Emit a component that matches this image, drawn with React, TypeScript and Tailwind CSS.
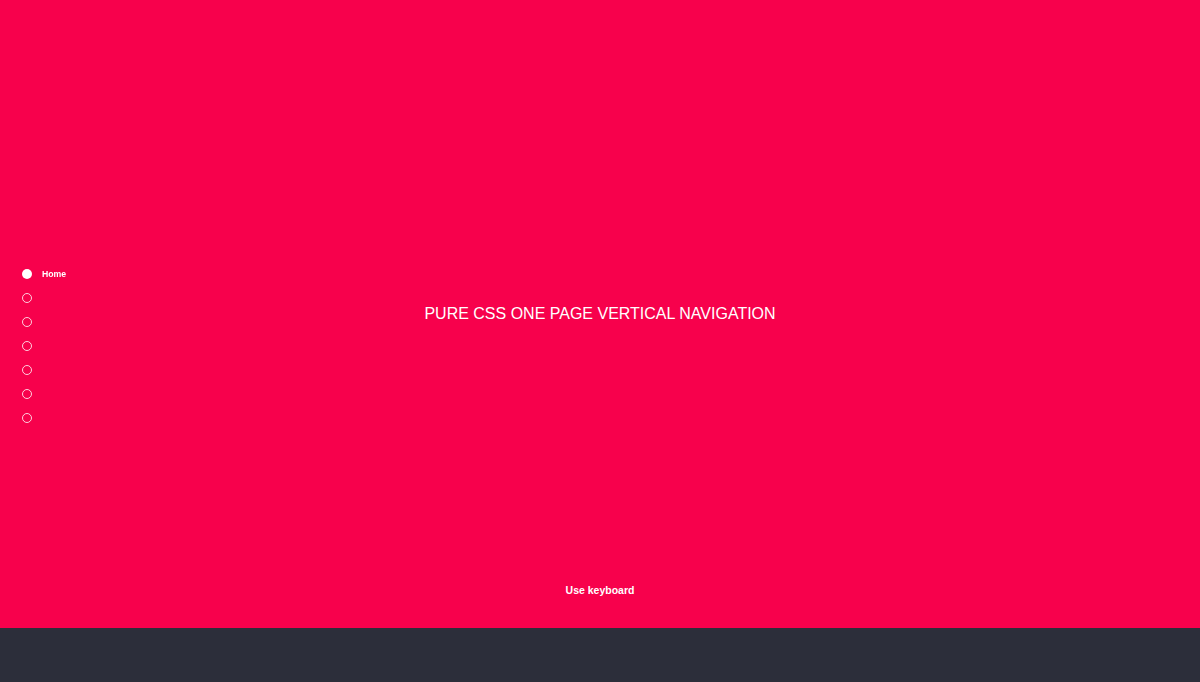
import * as React from 'react';

const sections = ['Home', 'About', 'Work', 'Services', 'Team', 'Blog', 'Contact'];

export default function App() {
  const active = 0;
  return (
    <div className="min-h-[682px] bg-[#2c2e3a] font-['Liberation_Sans',Arial,sans-serif] text-white">
      {/* Side navigation */}
      <nav className="fixed left-[22px] top-[262px] z-10">
        <ul className="flex flex-col">
          {sections.map((name, i) => (
            <li key={name} className="flex h-6 items-center gap-[10px]">
              <span
                className={
                  i === active
                    ? 'h-[10px] w-[10px] rounded-full bg-white'
                    : 'h-[10px] w-[10px] rounded-full border border-white/80'
                }
              />
              {i === active && <span className="text-[8.7px] font-bold leading-none">{name}</span>}
            </li>
          ))}
        </ul>
      </nav>

      {/* Section */}
      <section className="flex h-[628px] flex-col items-center bg-[#f7014c]">
        <div className="flex flex-1 items-center pt-[44px]">
          <h1 className="text-[16px] uppercase">Pure CSS One Page Vertical Navigation</h1>
        </div>
        <p className="pb-[29px] text-[10.5px] font-bold">Use keyboard</p>
      </section>
    </div>
  );
}
